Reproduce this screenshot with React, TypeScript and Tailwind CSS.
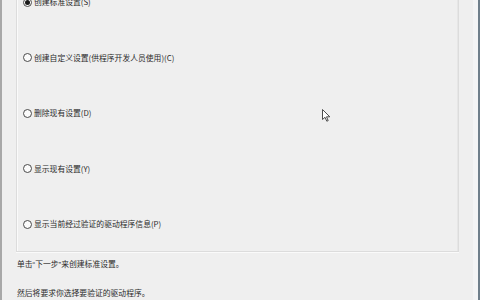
import React from "react";

const items = [
  { label: "创建标准设置(S)", checked: true },
  { label: "创建自定义设置(供程序开发人员使用)(C)", checked: false },
  { label: "删除现有设置(D)", checked: false },
  { label: "显示现有设置(Y)", checked: false },
  { label: "显示当前经过验证的驱动程序信息(P)", checked: false },
];

function Radio({ checked }: { checked: boolean }) {
  return (
    <span className="w-[9px] h-[9px] rounded-full border border-[#4a4a4a] bg-[#fbfbfb] flex items-center justify-center shrink-0">
      {checked && <span className="w-[5px] h-[5px] rounded-full bg-[#1a1a1a]" />}
    </span>
  );
}

export default function App() {
  const q = { fontFamily: '"Liberation Sans", sans-serif' };
  return (
    <div
      className="relative w-[480px] h-[300px] overflow-hidden bg-[#efefef] text-[#2a2a2a] flex"
      style={{ fontFamily: '"Noto Sans CJK SC", "Noto Sans", sans-serif' }}
    >
      <div className="w-[2px] h-full bg-[#a8a8a8] shrink-0" />
      <div className="flex-1 flex flex-col">
        <div className="pl-[14px] pr-[14px]">
          <div className="h-[252px] border-l border-r border-b border-l-[#dcdcdc] border-r-[#dcdcdc] border-b-[#dcdcdc] shadow-[inset_1px_0_0_#fafafa,inset_-1px_0_0_#e6e6e6,0_1px_0_#fafafa] flex flex-col gap-[43.5px] pl-[6px]">
            {items.map((it, i) => (
              <div
                key={i}
                className={`h-[12px] flex items-center gap-[2px] text-[7.8px] leading-none ${i === 0 ? "mt-[-4px]" : ""}`}
              >
                <Radio checked={it.checked} />
                <span>{it.label}</span>
              </div>
            ))}
          </div>
        </div>
        <div className="pl-[15px] pt-[6px] flex flex-col gap-[16px] text-[7.8px] leading-[12px]">
          <div>
            单击<span style={q}>“</span>下一步<span style={q}>”</span>来创建标准设置。
          </div>
          <div>然后将要求你选择要验证的驱动程序。</div>
        </div>
      </div>
      <div className="w-[5px] h-full bg-[#f4f5f6] shrink-0" />
      <div className="w-[2px] h-full bg-[#6f7f8b] shrink-0" />
      <svg
        className="absolute left-[322px] top-[109px]"
        width="9"
        height="13"
        viewBox="0 0 9 13"
      >
        <path
          d="M0.5 0.5 L0.5 10.5 L3 8.3 L4.8 12.2 L6.2 11.6 L4.5 7.8 L7.8 7.8 Z"
          fill="#ffffff"
          stroke="#3a3a3a"
          strokeWidth="0.9"
          strokeLinejoin="round"
        />
      </svg>
    </div>
  );
}
